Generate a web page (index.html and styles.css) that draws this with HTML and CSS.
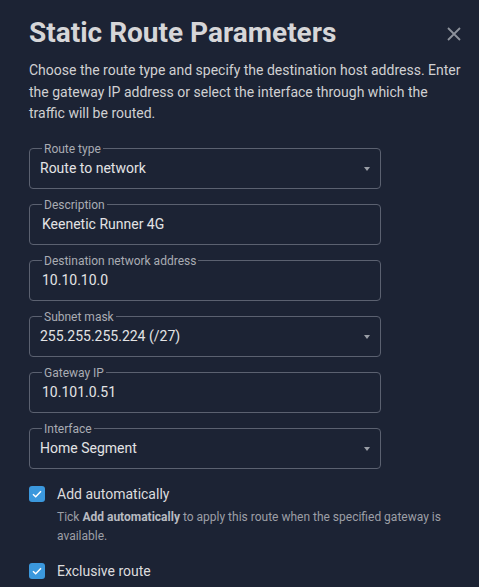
FILE: index.html
```html
<!DOCTYPE html>
<html>
<head>
<meta charset="utf-8">
<link rel="stylesheet" href="styles.css">
</head>
<body>
<div class="dialog">
  <div class="header">
    <h1 class="title">Static Route Parameters</h1>
    <button class="close" aria-label="Close">
      <svg width="14" height="14" viewBox="0 0 14 14"><path d="M1 1L13 13M13 1L1 13" stroke="#8d929c" stroke-width="1.8" fill="none"/></svg>
    </button>
  </div>
  <p class="intro">Choose the route type and specify the destination host address. Enter the gateway IP address or select the interface through which the traffic will be routed.</p>

  <div class="fields">
    <fieldset class="field select">
      <legend>Route type</legend>
      <span class="value">Route to network</span>
      <span class="arrow"></span>
    </fieldset>
    <fieldset class="field input">
      <legend>Description</legend>
      <span class="value">Keenetic Runner 4G</span>
    </fieldset>
    <fieldset class="field input">
      <legend>Destination network address</legend>
      <span class="value">10.10.10.0</span>
    </fieldset>
    <fieldset class="field select">
      <legend>Subnet mask</legend>
      <span class="value">255.255.255.224 (/27)</span>
      <span class="arrow"></span>
    </fieldset>
    <fieldset class="field input">
      <legend>Gateway IP</legend>
      <span class="value">10.101.0.51</span>
    </fieldset>
    <fieldset class="field select">
      <legend>Interface</legend>
      <span class="value">Home Segment</span>
      <span class="arrow"></span>
    </fieldset>
  </div>

  <div class="check">
    <span class="box"><svg width="10" height="8" viewBox="0 0 10 8"><path d="M1 4.2L3.7 6.7L9 1.3" stroke="#fff" stroke-width="1.5" fill="none"/></svg></span>
    <div class="check-text">
      <div class="check-label">Add automatically</div>
      <p class="hint">Tick <strong>Add automatically</strong> to apply this route when the specified gateway is available.</p>
    </div>
  </div>
  <div class="check">
    <span class="box"><svg width="10" height="8" viewBox="0 0 10 8"><path d="M1 4.2L3.7 6.7L9 1.3" stroke="#fff" stroke-width="1.5" fill="none"/></svg></span>
    <div class="check-text">
      <div class="check-label">Exclusive route</div>
    </div>
  </div>
</div>
</body>
</html>
```
FILE: styles.css
```css
html, body {
  margin: 0;
  padding: 0;
  background: #1c2334;
  height: 100%;
  overflow: hidden;
}
body {
  font-family: Roboto, "Liberation Sans", sans-serif;
  color: #d4d4d6;
}
.dialog {
  padding: 15px 18px 0 29px;
}
.header {
  display: flex;
  align-items: center;
  justify-content: space-between;
}
.title {
  margin: 0;
  font-size: 28px;
  font-weight: 700;
  line-height: 36px;
  color: #d6d6d8;
}
.close {
  background: none;
  border: 0;
  padding: 0;
  display: flex;
  margin-top: 1px;
}
.intro {
  margin: 9px -5px 0 0;
  font-size: 14px;
  line-height: 21.5px;
  color: #d0d0d2;
}
.fields {
  margin-top: 18px;
  display: flex;
  flex-direction: column;
  gap: 10px;
  width: 352px;
}
.field {
  margin: 0;
  border: 1px solid #5b6170;
  border-radius: 4px;
  padding: 0 10px;
  height: 46px;
  box-sizing: border-box;
  position: relative;
  min-width: 0;
}
.field legend {
  font-size: 12px;
  color: #a9acb3;
  padding: 0 2px;
  margin-left: 2px;
  line-height: 12px;
}
.field .value {
  display: block;
  font-size: 14px;
  line-height: 20px;
  margin-top: 3px;
  color: #e3e3e5;
}
.field.input .value {
  margin-left: 2px;
}
.arrow {
  position: absolute;
  right: 10px;
  top: 12px;
  width: 0;
  height: 0;
  border-left: 3.5px solid transparent;
  border-right: 3.5px solid transparent;
  border-top: 4px solid #9a9ea6;
}
.check {
  display: flex;
  align-items: flex-start;
  gap: 12px;
  margin-top: 15px;
}
.check + .check {
  margin-top: 15px;
}
.box {
  width: 16px;
  height: 16px;
  border-radius: 3px;
  background: #3b98dd;
  display: flex;
  align-items: center;
  justify-content: center;
  margin-top: 2px;
  flex: none;
}
.check-label {
  font-size: 14px;
  line-height: 20px;
  color: #dcdcde;
}
.hint {
  font-size: 12px;
  line-height: 19px;
  color: #9c9fa6;
  margin: 4px 0 0;
}
.hint strong {
  font-weight: 700;
  color: #b8bbc1;
}
```
